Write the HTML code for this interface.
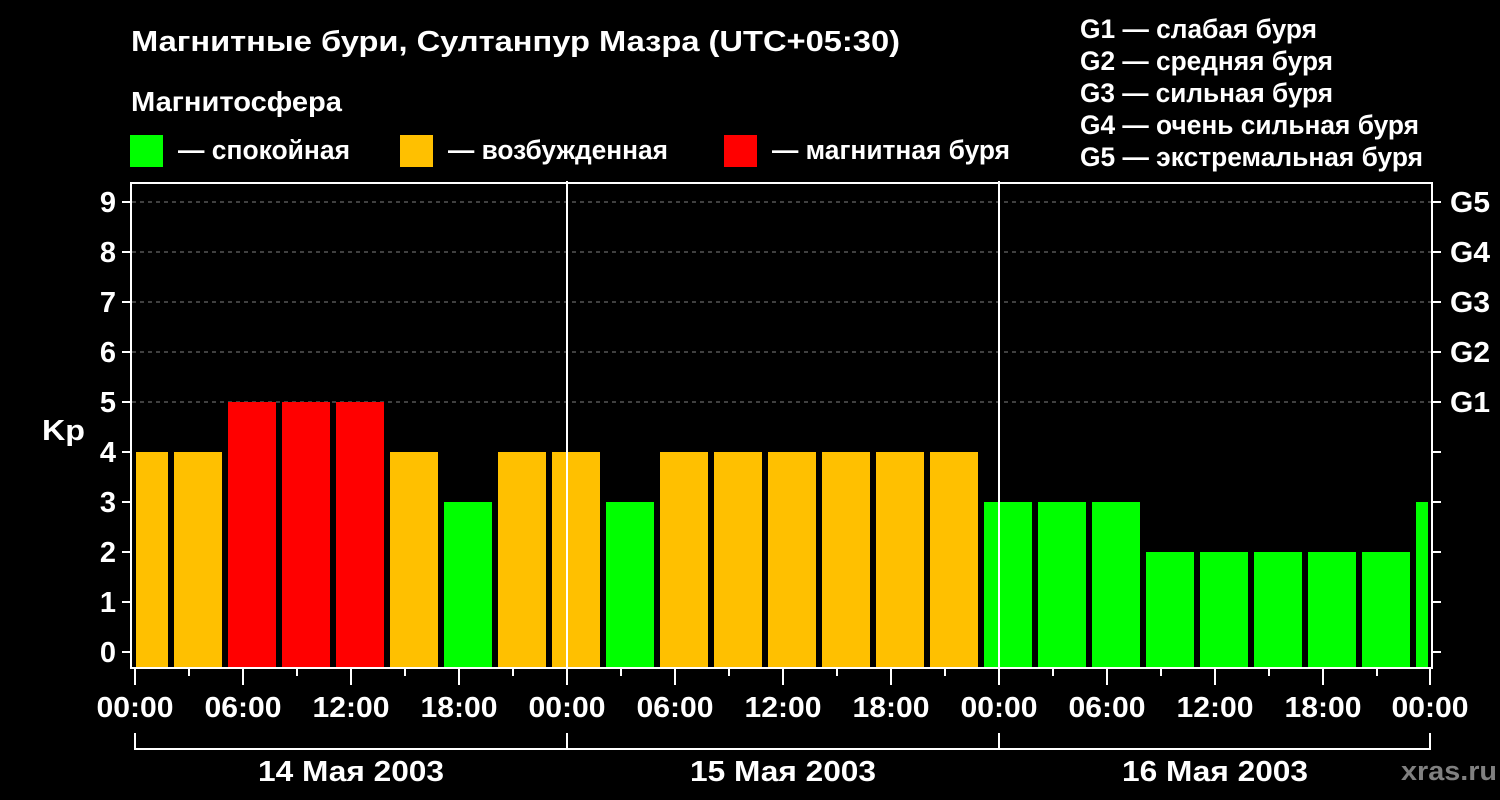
<!DOCTYPE html>
<html><head><meta charset="utf-8"><style>
html,body{margin:0;padding:0;background:#000;}
svg{display:block;font-family:"Liberation Sans","DejaVu Sans",sans-serif;font-weight:bold;}
</style></head><body>
<svg width="1500" height="800" viewBox="0 0 1500 800" xmlns="http://www.w3.org/2000/svg">
<rect width="1500" height="800" fill="#000"/>
<g fill="#fff">
<text x="131" y="51" font-size="29" textLength="769" lengthAdjust="spacingAndGlyphs">Магнитные бури, Султанпур Мазра (UTC+05:30)</text>
<text x="131" y="111" font-size="28" textLength="211" lengthAdjust="spacingAndGlyphs">Магнитосфера</text>
<text x="178" y="159" font-size="27" textLength="172" lengthAdjust="spacingAndGlyphs">— спокойная</text>
<text x="448" y="159" font-size="27" textLength="220" lengthAdjust="spacingAndGlyphs">— возбужденная</text>
<text x="772" y="159" font-size="27" textLength="238" lengthAdjust="spacingAndGlyphs">— магнитная буря</text>
<text x="1080" y="38" font-size="27" textLength="237" lengthAdjust="spacingAndGlyphs">G1 — слабая буря</text>
<text x="1080" y="70" font-size="27" textLength="253" lengthAdjust="spacingAndGlyphs">G2 — средняя буря</text>
<text x="1080" y="102" font-size="27" textLength="253" lengthAdjust="spacingAndGlyphs">G3 — сильная буря</text>
<text x="1080" y="134" font-size="27" textLength="339" lengthAdjust="spacingAndGlyphs">G4 — очень сильная буря</text>
<text x="1080" y="166" font-size="27" textLength="343" lengthAdjust="spacingAndGlyphs">G5 — экстремальная буря</text>
</g>
<rect x="130" y="135" width="33" height="32" fill="#00ff00"/>
<rect x="400" y="135" width="33" height="32" fill="#ffc000"/>
<rect x="724" y="135" width="33" height="32" fill="#ff0000"/>

<g stroke="#808080" stroke-width="1" stroke-dasharray="4,4">
<line x1="132" y1="202" x2="1431" y2="202"/>
<line x1="132" y1="252" x2="1431" y2="252"/>
<line x1="132" y1="302" x2="1431" y2="302"/>
<line x1="132" y1="352" x2="1431" y2="352"/>
<line x1="132" y1="402" x2="1431" y2="402"/>
</g>

<g>
<rect x="136" y="452" width="32" height="216" fill="#ffc000"/>
<rect x="174" y="452" width="48" height="216" fill="#ffc000"/>
<rect x="228" y="402" width="48" height="266" fill="#ff0000"/>
<rect x="282" y="402" width="48" height="266" fill="#ff0000"/>
<rect x="336" y="402" width="48" height="266" fill="#ff0000"/>
<rect x="390" y="452" width="48" height="216" fill="#ffc000"/>
<rect x="444" y="502" width="48" height="166" fill="#00ff00"/>
<rect x="498" y="452" width="48" height="216" fill="#ffc000"/>
<rect x="552" y="452" width="48" height="216" fill="#ffc000"/>
<rect x="606" y="502" width="48" height="166" fill="#00ff00"/>
<rect x="660" y="452" width="48" height="216" fill="#ffc000"/>
<rect x="714" y="452" width="48" height="216" fill="#ffc000"/>
<rect x="768" y="452" width="48" height="216" fill="#ffc000"/>
<rect x="822" y="452" width="48" height="216" fill="#ffc000"/>
<rect x="876" y="452" width="48" height="216" fill="#ffc000"/>
<rect x="930" y="452" width="48" height="216" fill="#ffc000"/>
<rect x="984" y="502" width="48" height="166" fill="#00ff00"/>
<rect x="1038" y="502" width="48" height="166" fill="#00ff00"/>
<rect x="1092" y="502" width="48" height="166" fill="#00ff00"/>
<rect x="1146" y="552" width="48" height="116" fill="#00ff00"/>
<rect x="1200" y="552" width="48" height="116" fill="#00ff00"/>
<rect x="1254" y="552" width="48" height="116" fill="#00ff00"/>
<rect x="1308" y="552" width="48" height="116" fill="#00ff00"/>
<rect x="1362" y="552" width="48" height="116" fill="#00ff00"/>
<rect x="1416" y="502" width="12" height="166" fill="#00ff00"/>
</g>

<g stroke="#fff" stroke-width="2" fill="none">
<rect x="131" y="183" width="1301" height="485"/>
<line x1="567" y1="181" x2="567" y2="668"/>
<line x1="999" y1="181" x2="999" y2="668"/>
<path d="M122 202h9M122 252h9M122 302h9M122 352h9M122 402h9M122 452h9M122 502h9M122 552h9M122 602h9M122 652h9"/>
<path d="M1432 202h9M1432 252h9M1432 302h9M1432 352h9M1432 402h9M1432 452h9M1432 502h9M1432 552h9M1432 602h9M1432 652h9"/>
<path d="M135 669v16M189 669v7M243 669v16M297 669v7M351 669v16M405 669v7M459 669v16M513 669v7M567 669v16M621 669v7M675 669v16M729 669v7M783 669v16M837 669v7M891 669v16M945 669v7M999 669v16M1053 669v7M1107 669v16M1161 669v7M1215 669v16M1269 669v7M1323 669v16M1377 669v7M1430 669v16"/>
<path d="M135 733v16H1430v-16M567 733v16M999 733v16"/>
</g>

<g fill="#fff" font-size="29">
<g text-anchor="end">
<text x="116" y="212">9</text><text x="116" y="262">8</text><text x="116" y="312">7</text>
<text x="116" y="362">6</text><text x="116" y="412">5</text><text x="116" y="462">4</text>
<text x="116" y="512">3</text><text x="116" y="562">2</text><text x="116" y="612">1</text>
<text x="116" y="662">0</text>
</g>
<text x="42" y="440" textLength="43" lengthAdjust="spacingAndGlyphs">Kp</text>
<text x="1450" y="212" textLength="40" lengthAdjust="spacingAndGlyphs">G5</text><text x="1450" y="262" textLength="40" lengthAdjust="spacingAndGlyphs">G4</text><text x="1450" y="312" textLength="40" lengthAdjust="spacingAndGlyphs">G3</text>
<text x="1450" y="362" textLength="40" lengthAdjust="spacingAndGlyphs">G2</text><text x="1450" y="412" textLength="40" lengthAdjust="spacingAndGlyphs">G1</text>
<g text-anchor="middle">
<text x="135" y="717" textLength="77" lengthAdjust="spacingAndGlyphs">00:00</text><text x="243" y="717" textLength="77" lengthAdjust="spacingAndGlyphs">06:00</text><text x="351" y="717" textLength="77" lengthAdjust="spacingAndGlyphs">12:00</text><text x="459" y="717" textLength="77" lengthAdjust="spacingAndGlyphs">18:00</text>
<text x="567" y="717" textLength="77" lengthAdjust="spacingAndGlyphs">00:00</text><text x="675" y="717" textLength="77" lengthAdjust="spacingAndGlyphs">06:00</text><text x="783" y="717" textLength="77" lengthAdjust="spacingAndGlyphs">12:00</text><text x="891" y="717" textLength="77" lengthAdjust="spacingAndGlyphs">18:00</text>
<text x="999" y="717" textLength="77" lengthAdjust="spacingAndGlyphs">00:00</text><text x="1107" y="717" textLength="77" lengthAdjust="spacingAndGlyphs">06:00</text><text x="1215" y="717" textLength="77" lengthAdjust="spacingAndGlyphs">12:00</text><text x="1323" y="717" textLength="77" lengthAdjust="spacingAndGlyphs">18:00</text>
<text x="1430" y="717" textLength="77" lengthAdjust="spacingAndGlyphs">00:00</text>
<text x="351" y="781" textLength="186" lengthAdjust="spacingAndGlyphs">14 Мая 2003</text>
<text x="783" y="781" textLength="186" lengthAdjust="spacingAndGlyphs">15 Мая 2003</text>
<text x="1215" y="781" textLength="186" lengthAdjust="spacingAndGlyphs">16 Мая 2003</text>
</g>
</g>
<text x="1401" y="780" font-size="27" fill="#808080" textLength="96" lengthAdjust="spacingAndGlyphs">xras.ru</text>
</svg>
</body></html>
